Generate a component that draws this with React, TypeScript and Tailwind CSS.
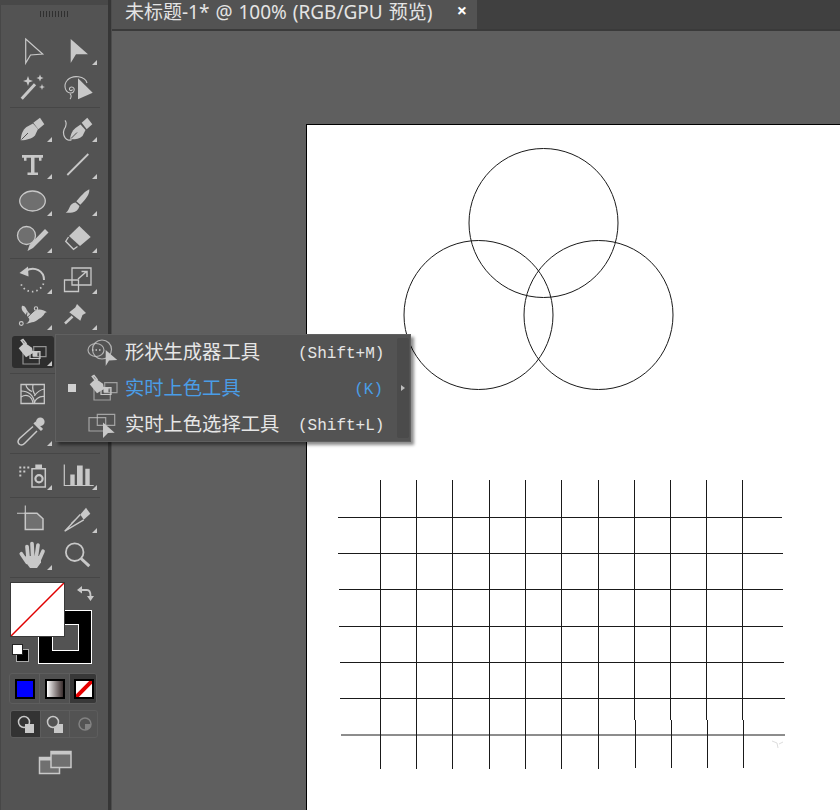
import React from 'react';

const cjk = { fontFamily: '"Noto Sans", "Noto Sans CJK SC", sans-serif' };

// svg is 40x36 with the tool centred on (20,18)
const Tool = ({ flag, active, children }: { flag?: boolean; active?: boolean; children: React.ReactNode }) => (
  <div className="relative h-full flex items-center justify-center">
    {active && <div className="absolute left-[1px] top-[2px] w-[42px] h-[32px] rounded-[3px] bg-[#2e2e2e]" />}
    <svg width="40" height="36" viewBox="0 0 40 36" className="relative text-[#c8c8c8]" fill="currentColor">
      {children}
      {flag && <path d="M39 27v5h-5z" />}
    </svg>
  </div>
);

const Row = ({ h = 36, children }: { h?: number; children: React.ReactNode }) => (
  <div className="grid grid-cols-[45px_45px] items-center pl-[9.5px]" style={{ height: h }}>
    {children}
  </div>
);

const LivePaint = () => (
  <>
    <path d="M20.700 12.700H33V22.700H20.700zM10 18.700H26.300V30H10z" fill="none" stroke="currentColor" strokeWidth="1.200" opacity="0.65" />
    <path d="M17 17.500h10v7H17z" fill="none" stroke="currentColor" strokeWidth="1.200" />
    <path d="M19.500 17.500h5v5h-5z" />
    <path d="M5.700 14.300L11.700 8.700 19 13.700 20 19 13 23.300z" />
    <path d="M11 10L8.300 6.500 10 5.500 13.500 10" fill="none" stroke="currentColor" strokeWidth="1.500" />
  </>
);

const ShapeBuilder = () => (
  <>
    <ellipse cx="12" cy="16" rx="8" ry="6.500" fill="none" stroke="currentColor" strokeWidth="1.200" opacity="0.8" />
    <circle cx="18" cy="15.500" r="9.500" fill="none" stroke="currentColor" strokeWidth="1.200" opacity="0.8" />
    <path d="M8 16h1.500M11.500 16H13M15 16h1.500" stroke="currentColor" strokeWidth="1.300" />
    <path d="M21.700 16L33.300 26 25 26.500 21.700 32z" />
  </>
);

const LiveSelect = () => (
  <>
    <path d="M5 11.700H21.700V25H5z" fill="none" stroke="currentColor" strokeWidth="1.200" opacity="0.7" />
    <path d="M13.300 8.300H30.700V19.300H13.300z" fill="none" stroke="currentColor" strokeWidth="1.200" opacity="0.7" />
    <path d="M19 16.500L30.700 26.700 24 27 19 32z" />
  </>
);

const Section = ({ h, children }: { h: number; children: React.ReactNode }) => (
  <div className="flex flex-col justify-center border-b border-[#464646] ml-[9px] mr-[8px] shrink-0" style={{ height: h }}>
    <div className="-ml-[9px] -mr-[8px]">{children}</div>
  </div>
);

const Toolbar = () => (
  <div className="w-[108px] shrink-0 h-full bg-[#535353] flex flex-col border-l border-[#474747]">
    <div className="h-[5px] -ml-px bg-[#484848]" />
    <div className="h-[27px] flex justify-center pt-[6px] pr-[1px]">
      <div className="w-[29px] h-[6px] bg-[repeating-linear-gradient(90deg,#2f2f2f_0,#2f2f2f_1px,transparent_1px,transparent_3px)]" />
    </div>
    <Section h={76}>
      <Row h={37}>
        <Tool><path d="M12.700 6L29.700 21 17.500 22 12.700 30z" fill="none" stroke="currentColor" strokeWidth="1.200" /></Tool>
        <Tool flag><path d="M12.700 6L30 21.300 18 21.300 12.700 30z" /></Tool>
      </Row>
      <Row h={37}>
        <Tool>
          <path d="M8.700 28.700L22 14.300" stroke="currentColor" strokeWidth="3" />
          <path d="M15 6l1.300 3.700 3.700 1.300-3.700 1.300L15 16l-1.300-3.700L10 11l3.700-1.300zM27 4.500l1 2.500 2.500 1-2.500 1-1 2.500-1-2.500-2.500-1 2.500-1zM29 14l.8 2.200 2.200 .8-2.200 .8-.8 2.200-.8-2.200-2.200-.8 2.200-.8z" />
        </Tool>
        <Tool>
          <path d="M20 8.300L34.700 22.700 20 29.300z" />
          <path d="M29 13C27 6 15 4.500 9.500 10 5 15 7 22 12 23c3 .5 5-2 4-4.500-1-2-4-2-4.500 0s2 3 3 1M12 24c2 1 1 4 0 5" fill="none" stroke="currentColor" strokeWidth="1.100" />
        </Tool>
      </Row>
    </Section>
    <Section h={151}>
      <Row h={37}>
        <Tool flag>
          <path d="M7.700 30.300C8 25 9.500 20 13.500 17l6.500-3.500 5 5.500-3 6.500c-3.500 3.500-8.500 4.500-13.800 4.800z" />
          <path d="M20.300 12.700L27 7.700 31.300 14.300 25.300 19.300z" />
          <path d="M8.500 29.500L15 23" stroke="#535353" strokeWidth="1" />
        </Tool>
        <Tool flag>
          <path d="M12 29.300C12.500 25 14 20.500 17.500 18l5-3.500 5 5.500-3 6c-3.500 3-7.500 3.500-12.500 3.300z" />
          <path d="M23.700 12.700L29.300 7.700 34.300 14.300 28.700 19.300z" />
          <path d="M7 10.300c2.500 3 1 6-.8 9-1.500 3-.8 9 3.800 10.700 2 .5 3 0 3.500-.5" fill="none" stroke="currentColor" strokeWidth="1.200" />
          <path d="M13 28.500L19 22.500" stroke="#535353" strokeWidth="1" />
        </Tool>
      </Row>
      <Row h={37}>
        <Tool flag>
          <path d="M9 8h21v2.800h-1.500v3H26V10.800h-4.500V25.500H25V28H14.500v-2.500H18V10.800h-4.500v3H11v-3H9z" />
        </Tool>
        <Tool flag><path d="M9.300 28L30.300 7" stroke="currentColor" strokeWidth="1.800" /></Tool>
      </Row>
      <Row h={37}>
        <Tool flag><ellipse cx="19.500" cy="17" rx="12.800" ry="10" fill="#6f6f6f" stroke="currentColor" strokeWidth="1.300" /></Tool>
        <Tool flag>
          <path d="M31.300 5.300c.5 5-3.500 10-9 15.500l-4-3.500c4.500-5 8.500-10 13-12zM17.500 18.500l4 3.500c-1 3.500-3.500 6-7 6.500-2.500.4-5 .4-6.800.2 2.500-1.500 3-3.500 4-5.700 1-2.500 3-4 5.800-4.500z" />
        </Tool>
      </Row>
      <Row h={37}>
        <Tool flag>
          <circle cx="13.500" cy="14.500" r="9" fill="#6f6f6f" stroke="currentColor" strokeWidth="1.300" />
          <path d="M32 8l3.500 3.500L20 27l-5.500 3 2-6z" />
        </Tool>
        <Tool flag>
          <path d="M21.300 5L32.700 16 22 25 11 15z" />
          <path d="M10.500 16L7.700 20.300 15.500 28.300 19.500 25.500" fill="none" stroke="currentColor" strokeWidth="1.300" />
        </Tool>
      </Row>
    </Section>
    <Section h={115}>
      <Row>
        <Tool flag>
          <path d="M13 8.500C22 4 31 9 31 18" fill="none" stroke="currentColor" strokeWidth="2" />
          <path d="M6.500 11L15 4.500l.500 10z" />
          <path d="M30.500 21.500A12 12 0 0 1 8 22" fill="none" stroke="currentColor" strokeWidth="1.800" strokeDasharray="1.500 3" />
        </Tool>
        <Tool flag>
          <path d="M14 6h19v17H14zM6.500 18h14v11.500H6.500z" fill="none" stroke="currentColor" strokeWidth="1.300" />
          <path d="M20 17l8-7M23.500 9.500h5.500V15" fill="none" stroke="currentColor" strokeWidth="1.500" />
        </Tool>
      </Row>
      <Row>
        <Tool flag>
          <path d="M9 7.700C11 7.500 12.500 9 13 10.300 14 12.500 15.500 15 17.300 16 19 15.500 20.500 13.500 22.300 12.700 25 11 29 10.500 34 14.300 32.500 14 31.500 15.500 30.700 17 29 19 27.500 20 25.700 21 23.500 23 21.500 24 19 24.300 16.500 25 14.500 25.500 12.300 26 14.500 25 16.500 23.500 16.300 21 15 18.500 12.500 16.500 10.700 14.300 9 12.500 8 10 9 7.700z" />
          <path d="M8.500 25L23 11M14 14.500L13 20" stroke="#535353" strokeWidth="1" fill="none" />
          <circle cx="8.300" cy="25.500" r="1.900" fill="#535353" stroke="currentColor" strokeWidth="1.100" />
          <circle cx="23" cy="10.500" r="1.700" fill="#535353" stroke="currentColor" strokeWidth="1.100" />
        </Tool>
        <Tool flag>
          <path d="M19 6L28 15 24.500 17 22.300 22.700 11.300 14.300 17.300 9.500z" />
          <path d="M7 25.500L14.500 18.500" stroke="currentColor" strokeWidth="2.500" />
        </Tool>
      </Row>
      <Row>
        <Tool flag active><LivePaint /></Tool>
        <div />
      </Row>
    </Section>
    <Section h={80}>
      <Row h={37}>
        <Tool>
          <path d="M8 7.500h23.300v19H8z" fill="none" stroke="currentColor" strokeWidth="1.300" />
          <path d="M8 20c5-3 11-2 12 6.500M8 14c7 0 13 4 13.500 12.500M20 7.500c-1 5 1 9 2.500 11M31.300 12c-5 1-8 4-10 7M21.500 26c0-3 4-7 9.800-6.500M13 7.500c0 3 3 6 6 7" fill="none" stroke="#c8c8c8" strokeWidth="1.200" />
        </Tool>
        <div />
      </Row>
      <Row h={37}>
        <Tool flag>
          <circle cx="27.300" cy="7.800" r="4.300" />
          <path d="M21.500 8.500L29 16" stroke="currentColor" strokeWidth="3" />
          <path d="M20 12.500L6.500 24.500c-2 2.500-1.500 4.500-.5 5.500s3.500 1.500 5.500-.5L24 17" fill="none" stroke="currentColor" strokeWidth="1.500" />
        </Tool>
        <div />
      </Row>
    </Section>
    <Section h={44}>
      <Row h={37}>
        <Tool flag>
          <path d="M6.300 8.500h2v2h-2zM10.300 8.500h2v2h-2zM14.300 8.500h2v2h-2zM6.300 12.500h2v2h-2zM10.300 12.500h2v2h-2zM6.300 16.500h2v2h-2z" />
          <path d="M22.300 6.500H29v4.300h-6.700z" />
          <path d="M19 10.800h13.300V29H19z" fill="none" stroke="currentColor" strokeWidth="1.500" />
          <circle cx="26" cy="20.800" r="3.600" fill="none" stroke="currentColor" strokeWidth="2.200" />
        </Tool>
        <Tool flag>
          <path d="M6.300 6.500v21H35.700" fill="none" stroke="currentColor" strokeWidth="1.200" />
          <path d="M12.300 16.500h4.400v11h-4.400zM19 7.500h5.700v20H19zM27.300 10.800h4.400v16.700h-4.400z" />
        </Tool>
      </Row>
    </Section>
    <Section h={80}>
      <Row h={37}>
        <Tool>
          <path d="M4 12.200h8.300M12.300 4.500V13" stroke="currentColor" strokeWidth="1.100" fill="none" />
          <path d="M12.300 12.200H24l6 5.600v10.700H12.300z" fill="#707070" stroke="currentColor" strokeWidth="1.500" />
        </Tool>
        <Tool flag>
          <path d="M22.300 13.500L28 6.800 32.300 12.800 25.700 18.800z" />
          <path d="M22.300 13.500L6.700 30.200 25.700 18.800" fill="none" stroke="currentColor" strokeWidth="1.400" />
          <path d="M13 22.500L19 17" stroke="currentColor" strokeWidth="1" />
        </Tool>
      </Row>
      <Row h={37}>
        <Tool flag>
          <path d="M12.500 18H28V24.500L24 30H17L12.500 24z" />
          <path d="M14 24.200L8.300 15.800M15 19L14 8.500M19.700 19L19 5.500M23.300 19L25 7M26.700 20.800L30 13.200" fill="none" stroke="currentColor" strokeWidth="3.700" strokeLinecap="round" />
        </Tool>
        <Tool>
          <circle cx="16.700" cy="14.200" r="8.800" fill="none" stroke="currentColor" strokeWidth="1.800" />
          <path d="M23 20.500L31.300 28.200" stroke="currentColor" strokeWidth="3" />
        </Tool>
      </Row>
    </Section>

    <div className="relative h-[92px] shrink-0">
      <div className="absolute left-[37px] top-[32px] w-[54px] h-[54px] bg-black border border-white flex items-center justify-center">
        <div className="w-[27px] h-[27px] bg-[#535353] border border-white" />
      </div>
      <div className="absolute left-[9px] top-[4px] w-[55px] h-[55px] bg-white border border-[#3a3a3a] overflow-hidden">
        <svg className="w-full h-full" viewBox="0 0 53 53"><path d="M0 53L53 0" stroke="#e00000" strokeWidth="1.500" /></svg>
      </div>
      <svg className="absolute left-[75px] top-[8px] text-[#c8c8c8]" width="18" height="16" viewBox="0 0 18 16" fill="none" stroke="currentColor">
        <path d="M4 4h7c2.500 0 3.500 2 3.500 6" strokeWidth="1.800" />
        <path d="M6 0L1 4l5 3.500zM11 10h7l-3.500 5z" fill="currentColor" stroke="none" />
      </svg>
      <div className="absolute left-[15px] top-[71px] w-[13px] h-[13px] bg-black border border-[#aaaaaa]" />
      <div className="absolute left-[11px] top-[66px] w-[11px] h-[11px] bg-white border border-[#222222]" />
    </div>

    <div className="mt-[3px] ml-[8px] w-[88px] h-[31px] shrink-0 grid grid-cols-[30px_30px_28px] rounded-[3px] border border-[#5d5d5d] bg-[#505050] overflow-hidden">
      <div className="flex items-center justify-center border-r border-[#5d5d5d]">
        <div className="w-[20px] h-[20px] bg-[#0000ff] border-[2px] border-black" />
      </div>
      <div className="flex items-center justify-center border-r border-[#5d5d5d]">
        <div className="w-[20px] h-[20px] border-[2px] border-black bg-gradient-to-r from-white to-[#3c3030]" />
      </div>
      <div className="flex items-center justify-center bg-[#383838]">
        <div className="w-[20px] h-[20px] border-[2px] border-black bg-white overflow-hidden">
          <svg className="w-full h-full" viewBox="0 0 16 16"><path d="M0 16L16 0" stroke="#e60000" strokeWidth="4" /></svg>
        </div>
      </div>
    </div>

    <div className="mt-[6px] ml-[9px] w-[88px] h-[28px] shrink-0 grid grid-cols-[29px_30px_29px] rounded-[3px] border border-[#5d5d5d] overflow-hidden text-[#c8c8c8]">
      <div className="flex items-center justify-center bg-[#333333]">
        <svg width="20" height="20" viewBox="0 0 20 20"><circle cx="8" cy="8" r="5.500" fill="none" stroke="currentColor" strokeWidth="1.500" /><path d="M9 10h9v9H9z" fill="currentColor" /></svg>
      </div>
      <div className="flex items-center justify-center border-x border-[#5d5d5d]">
        <svg width="20" height="20" viewBox="0 0 20 20"><path d="M9 10h9v9H9z" fill="currentColor" /><circle cx="8" cy="8" r="5.500" fill="#535353" stroke="currentColor" strokeWidth="1.500" /></svg>
      </div>
      <div className="flex items-center justify-center opacity-40">
        <svg width="20" height="20" viewBox="0 0 20 20"><circle cx="10" cy="10" r="6" fill="none" stroke="currentColor" strokeWidth="1.500" /><path d="M10 10h6a6 6 0 0 1-6 6z" fill="currentColor" /></svg>
      </div>
    </div>

    <div className="mt-[12px] ml-[37px] shrink-0">
      <svg width="36" height="26" viewBox="0 0 36 26" className="text-[#c8c8c8]" fill="none" stroke="currentColor" strokeWidth="1.500">
        <path d="M1.500 7.500h20v16h-20z" fill="#707070" />
        <path d="M1.500 7.500h20v3h-20z" fill="#c8c8c8" stroke="none" />
        <path d="M13 1.500h20v16H13z" fill="#707070" />
        <path d="M13 1.500h20v3H13z" fill="#c8c8c8" stroke="none" />
      </svg>
    </div>
  </div>
);

const items = [
  { label: '形状生成器工具', key: '(Shift+M)', icon: <ShapeBuilder /> },
  { label: '实时上色工具', key: '(K)', icon: <LivePaint />, active: true },
  { label: '实时上色选择工具', key: '(Shift+L)', icon: <LiveSelect /> },
];

const Flyout = () => (
  <div className="absolute left-[55px] top-[334px] w-[356px] h-[108px] bg-[#535353] border border-[#606060] shadow-[3px_3px_3px_rgba(0,0,0,0.45)] flex">
    <div className="flex-1 flex flex-col justify-center">
      {items.map(it => (
        <div key={it.label} className="h-[36px] flex items-center">
          <div className="w-[12px] ml-[10px] flex justify-center">
            {it.active && <div className="w-[8px] h-[8px] bg-[#d0d0d0]" />}
          </div>
          <svg width="36" height="36" viewBox="0 0 36 36" className="ml-[6px] text-[#c8c8c8]" fill="currentColor">{it.icon}</svg>
          <span className={it.active ? 'ml-[5px] w-[173px] text-[19.3px] leading-none text-[#4a9de6]' : 'ml-[5px] w-[173px] text-[19.3px] leading-none text-[#e6e6e6]'} style={cjk}>{it.label}</span>
          <span className={it.active ? "w-[85px] pt-[3px] text-right text-[16px] leading-none font-['Liberation_Mono'] text-[#4a9de6]" : "w-[85px] pt-[3px] text-right text-[16px] leading-none font-['Liberation_Mono'] text-[#e6e6e6]"}>{it.key}</span>
        </div>
      ))}
    </div>
    <div className="w-[12px] my-[3px] mr-[1px] rounded-[2px] bg-[#4b4b4b] flex items-center justify-center">
      <div className="w-0 h-0 border-y-[3.500px] border-y-transparent border-l-[4px] border-l-[#bdbdbd]" />
    </div>
  </div>
);

const hLines = [
  [338, 782, 517.5], [338, 783, 553.5], [339, 783, 589.5], [339, 783, 626.5],
  [340, 784, 662.5], [340, 785, 698.5], [341, 785, 735],
];
// the hand-drawn verticals break a little near the foot of the grid
const vLines = [
  [380.5, 380.5, 769], [416.5, 416.5, 769], [452.5, 452.5, 769], [489.5, 489.5, 769], [525.5, 525.5, 769],
  [561.5, 561.5, 769], [598.5, 598.5, 769], [634.5, 635.5, 768], [670.5, 671.5, 768], [706.5, 707.5, 768], [742.5, 743.5, 768],
];

const Artwork = () => (
  <svg className="w-full h-full block" viewBox="307 125 533 685" fill="none" stroke="#1a1a1a" strokeWidth="1">
    <circle cx="543.500" cy="223" r="74.500" />
    <circle cx="478.500" cy="315" r="74.500" />
    <circle cx="598.500" cy="315" r="74.500" />
    {hLines.map(([a, b, y]) => <path key={y} d={`M${a} ${y}H${b}`} />)}
    {vLines.map(([a, b, end]) => <path key={a} d={`M${a} 480V720M${b} 720V${end}`} />)}
    <path d="M772 741l5 2 1 5M779 744l4-2" stroke="#dddddd" />
  </svg>
);

export default function App() {
  return (
    <div className="relative w-[840px] h-[810px] flex overflow-hidden bg-[#606060]">
      <Toolbar />
      <div className="w-[3px] shrink-0 bg-[#363636]" />
      <div className="flex-1 min-w-0 flex flex-col border-l border-[#4c4c4c]">
        <div className="h-[31px] shrink-0 flex bg-[#404040] border-b-2 border-[#3a3a3a]">
          <div className="w-[365px] h-full bg-[#535353] flex items-center pl-[13px] pb-[5px] text-[#e4e4e4]">
            <span className="w-[329px] text-[19px] leading-[24px] whitespace-nowrap [word-spacing:1px]" style={cjk}>未标题-1* @ 100% (RGB/GPU 预览)</span>
            <span className="w-[16px] text-center text-[18px] font-bold leading-[18px] text-white mb-[4px]" style={cjk}>×</span>
          </div>
        </div>
        <div className="flex-1 min-h-0 bg-[#5f5f5f] pl-[194px] pt-[93px]">
          <div className="w-full h-full bg-white border-l border-t border-black">
            <Artwork />
          </div>
        </div>
      </div>
      <Flyout />
    </div>
  );
}
